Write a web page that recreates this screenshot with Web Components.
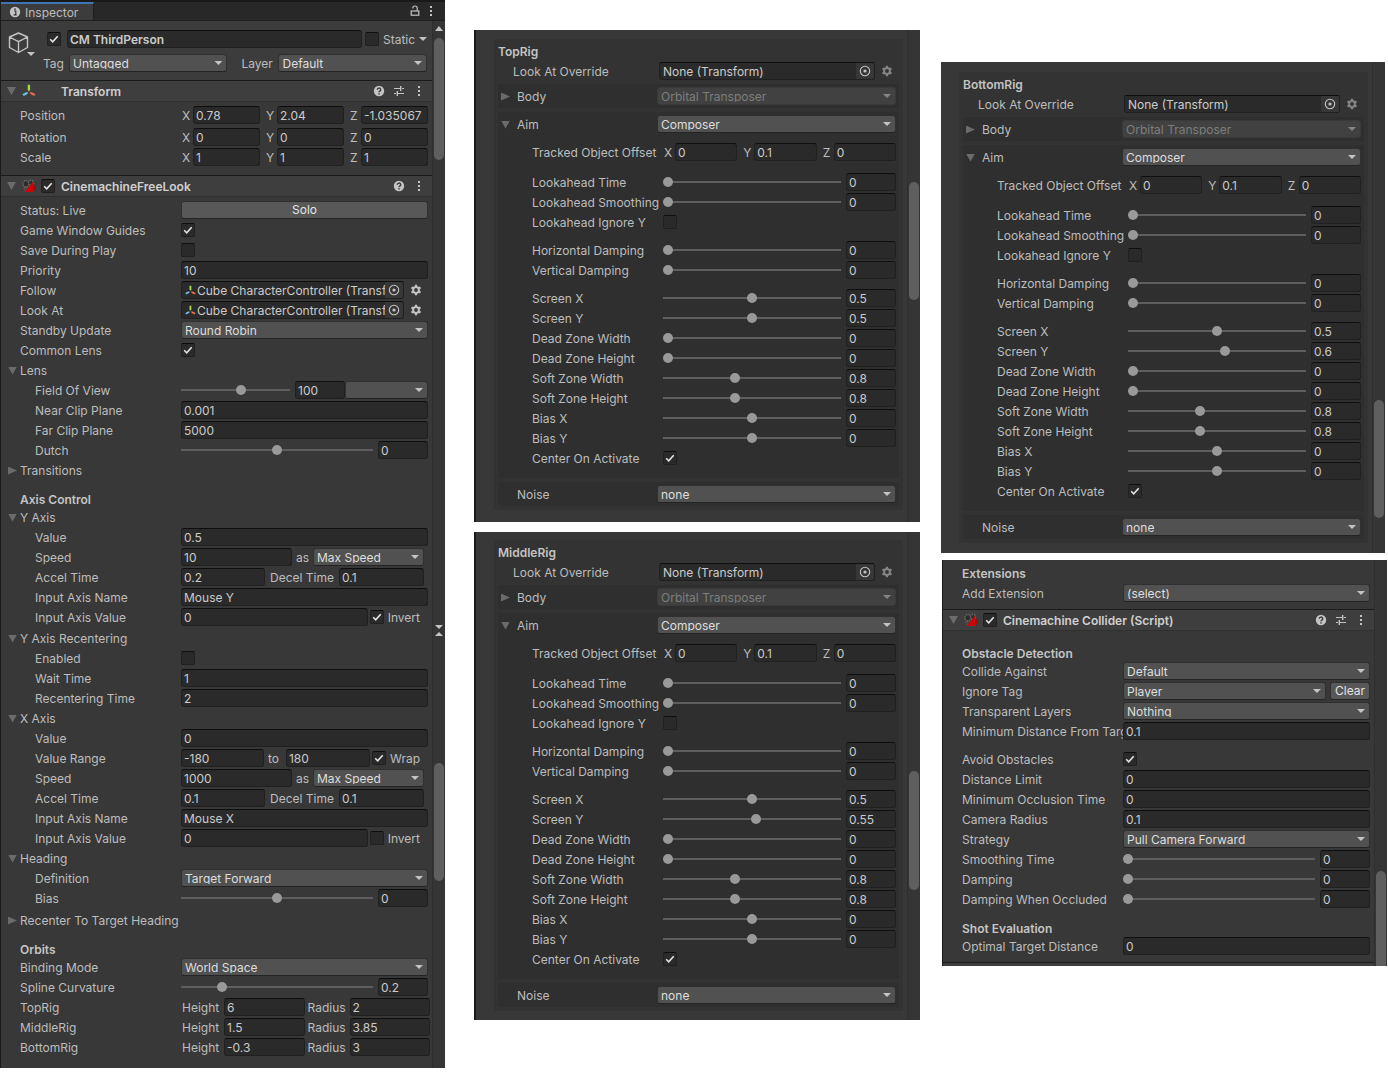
<!DOCTYPE html>
<html lang="en">
<head>
<meta charset="utf-8">
<title>Inspector</title>
<style>
  body { margin: 0; background: #fff; font: 12px/18px Inter, "Liberation Sans", sans-serif; color: #bdbdbd; }
</style>
</head>
<body>
<inspector-board>
  <inspector-column slot="a">
    <inspector-panel edge="1" tabbed bars="s5 u5 s7 t122 s465 d4 s3 u4 s127 t118 s187">
      <object-header></object-header>
      <component-header icon="transform" name="Transform" presets></component-header>
      <inspector-section>
        <field-row label="Position"><number-field prefix="X" value="0.78"></number-field><number-field prefix="Y" value="2.04"></number-field><number-field prefix="Z" value="-1.035067"></number-field></field-row>
        <v-space style="--h:2px"></v-space>
        <field-row label="Rotation"><number-field prefix="X" value="0"></number-field><number-field prefix="Y" value="0"></number-field><number-field prefix="Z" value="0"></number-field></field-row>
        <field-row label="Scale"><number-field prefix="X" value="1"></number-field><number-field prefix="Y" value="1"></number-field><number-field prefix="Z" value="1"></number-field></field-row>
        <v-space style="--h:7px"></v-space>
      </inspector-section>
      <component-header icon="camera" name="CinemachineFreeLook" toggle></component-header>
      <inspector-section>
        <field-row label="Status: Live"><push-button wide>Solo</push-button></field-row>
        <check-field label="Game Window Guides" checked></check-field>
        <check-field label="Save During Play"></check-field>
        <number-field label="Priority" value="10"></number-field>
        <object-field label="Follow" value="Cube CharacterController (Transform)" icon></object-field>
        <object-field label="Look At" value="Cube CharacterController (Transform)" icon></object-field>
        <popup-field label="Standby Update" value="Round Robin"></popup-field>
        <check-field label="Common Lens" checked></check-field>
        <fold-row label="Lens" open></fold-row>
        <slider-field nest label="Field Of View" min="1" max="179" value="100"><popup-field style="--w:83px" name="Lens preset" value=""></popup-field></slider-field>
        <number-field nest label="Near Clip Plane" value="0.001"></number-field>
        <number-field nest label="Far Clip Plane" value="5000"></number-field>
        <slider-field nest label="Dutch" min="-180" max="180" value="0"></slider-field>
        <fold-row label="Transitions"></fold-row>
        <section-title style="--h:9px">Axis Control</section-title>
        <fold-row label="Y Axis" open></fold-row>
        <number-field nest label="Value" value="0.5"></number-field>
        <field-row nest tight label="Speed" tail="4"><number-field name="Speed" value="10"></number-field><span>as</span><popup-field style="--w:111px" name="Speed mode" value="Max Speed"></popup-field></field-row>
        <field-row nest label="Accel Time" tail="4"><number-field name="Accel Time" value="0.2"></number-field><number-field long prefix="Decel Time" value="0.1"></number-field></field-row>
        <number-field nest label="Input Axis Name" value="Mouse Y"></number-field>
        <field-row nest snug label="Input Axis Value" tail="8"><number-field name="Input Axis Value" value="0"></number-field><check-field suffix="Invert" checked></check-field></field-row>
        <v-space style="--h:1px"></v-space>
        <fold-row label="Y Axis Recentering" open></fold-row>
        <check-field nest label="Enabled"></check-field>
        <number-field nest label="Wait Time" value="1"></number-field>
        <number-field nest label="Recentering Time" value="2"></number-field>
        <fold-row label="X Axis" open></fold-row>
        <number-field nest label="Value" value="0"></number-field>
        <field-row nest snug label="Value Range" tail="8"><number-field name="Minimum" value="-180"></number-field><number-field range prefix="to" value="180"></number-field><check-field suffix="Wrap" checked></check-field></field-row>
        <field-row nest tight label="Speed" tail="4"><number-field name="Speed" value="1000"></number-field><span>as</span><popup-field style="--w:111px" name="Speed mode" value="Max Speed"></popup-field></field-row>
        <field-row nest label="Accel Time" tail="4"><number-field name="Accel Time" value="0.1"></number-field><number-field long prefix="Decel Time" value="0.1"></number-field></field-row>
        <number-field nest label="Input Axis Name" value="Mouse X"></number-field>
        <field-row nest snug label="Input Axis Value" tail="8"><number-field name="Input Axis Value" value="0"></number-field><check-field suffix="Invert"></check-field></field-row>
        <fold-row label="Heading" open></fold-row>
        <popup-field nest label="Definition" value="Target Forward"></popup-field>
        <slider-field nest label="Bias" min="-180" max="180" value="0"></slider-field>
        <v-space style="--h:2px"></v-space>
        <fold-row label="Recenter To Target Heading"></fold-row>
        <section-title style="--h:9px">Orbits</section-title>
        <popup-field label="Binding Mode" value="World Space"></popup-field>
        <slider-field label="Spline Curvature" min="0" max="1" value="0.2"></slider-field>
        <field-row snug tail="-2" label="TopRig"><number-field word prefix="Height" value="6"></number-field><number-field word prefix="Radius" value="2"></number-field></field-row>
        <field-row snug tail="-2" label="MiddleRig"><number-field word prefix="Height" value="1.5"></number-field><number-field word prefix="Radius" value="3.85"></number-field></field-row>
        <field-row snug tail="-2" label="BottomRig"><number-field word prefix="Height" value="-0.3"></number-field><number-field word prefix="Radius" value="3"></number-field></field-row>
        <v-space style="--h:10px"></v-space>
      </inspector-section>
    </inspector-panel>
  </inspector-column>

  <inspector-column slot="b" style="--top:30px;--gap:10px">
    <inspector-panel edge="2" bars="s152 t118 s222">
      <rig-editor name="TopRig" screen-y="0.5" style="--top:9px;--bottom:12px"></rig-editor>
    </inspector-panel>
    <inspector-panel edge="2" bars="s239 t119 s130">
      <rig-editor name="MiddleRig" screen-y="0.55" style="--top:8px;--bottom:9px"></rig-editor>
    </inspector-panel>
  </inspector-column>

  <inspector-column slot="c" style="--top:62px;--gap:7px">
    <inspector-panel edge="0" bars="s338 t118 s35" style="margin-right:2px">
      <rig-editor name="BottomRig" screen-y="0.6" style="--top:10px;--bottom:10px"></rig-editor>
    </inspector-panel>
    <inspector-panel edge="1" bars="s311 b95" style="margin-left:1px">
      <inspector-section flush>
        <section-title style="--h:4px">Extensions</section-title>
        <v-space style="--h:2px"></v-space>
        <popup-field label="Add Extension" value="(select)"></popup-field>
        <v-space style="--h:5px"></v-space>
      </inspector-section>
      <component-header icon="camera" name="Cinemachine Collider (Script)" toggle presets></component-header>
      <inspector-section>
        <section-title style="--h:9px">Obstacle Detection</section-title>
        <popup-field label="Collide Against" value="Default"></popup-field>
        <field-row tight label="Ignore Tag"><popup-field name="Ignore Tag" value="Player"></popup-field><push-button>Clear</push-button></field-row>
        <popup-field label="Transparent Layers" value="Nothing"></popup-field>
        <number-field label="Minimum Distance From Target" value="0.1"></number-field>
        <v-space style="--h:8px"></v-space>
        <check-field label="Avoid Obstacles" checked></check-field>
        <number-field label="Distance Limit" value="0"></number-field>
        <number-field label="Minimum Occlusion Time" value="0"></number-field>
        <number-field label="Camera Radius" value="0.1"></number-field>
        <popup-field label="Strategy" value="Pull Camera Forward"></popup-field>
        <slider-field label="Smoothing Time" min="0" max="2" value="0"></slider-field>
        <slider-field label="Damping" min="0" max="10" value="0"></slider-field>
        <slider-field label="Damping When Occluded" min="0" max="10" value="0"></slider-field>
        <section-title style="--h:9px">Shot Evaluation</section-title>
        <number-field label="Optimal Target Distance" value="0"></number-field>
        <v-space style="--h:5px"></v-space>
      </inspector-section>
      <end-rule></end-rule>
    </inspector-panel>
  </inspector-column>
</inspector-board>

<script>
const ICONS = {
  transform: `<svg class="ic" width="14" height="14" viewBox="0 0 14 14"><path d="M5.7 0.8h2.4v5L6.9 7.4 5.7 5.8z" fill="#a6d94a"/><path d="M6.2 8.3L5.4 10 1.8 12 0.4 10.2 3.9 8.2z" fill="#6cc0ee"/><path d="M7.6 8.3l2.3-.1 3.6 2-1.4 1.9-3.6-2z" fill="#ee6e42"/></svg>`,
  camera: `<svg class="ic" width="16" height="14" viewBox="0 0 16 14"><path d="M2 7.500h6l-3.500 5H3z" fill="#4c4c4c"/><g fill="#2c2c2c" stroke="#6a6a6a" stroke-width="1.400" stroke-dasharray="1.600 .9"><circle cx="5" cy="4.800" r="3.200"/><circle cx="10" cy="3.800" r="2.500"/></g><path d="M3.800 13L12.200 2.500V13z" fill="#cc0606"/><path d="M12 7.800L15 5v7.500L12 10.500z" fill="#b00404"/></svg>`,
  help: `<svg width="12" height="12" viewBox="0 0 12 12"><circle cx="6" cy="6" r="5.200" fill="#c4c4c4"/><path d="M4.300 4.700a1.700 1.600 0 1 1 2.500 1.400c-.6.300-.8.600-.8 1.100" fill="none" stroke="#3a3a3a" stroke-width="1.400"/><rect x="5.300" y="8.200" width="1.400" height="1.400" fill="#3a3a3a"/></svg>`,
  preset: `<svg width="12" height="12" viewBox="0 0 12 12"><path d="M1 3.500h6M9 3.500h2M1 8.500h2M5 8.500h6" stroke="#c4c4c4" stroke-width="1.200"/><path d="M7.700 1v5M4.300 6v5" stroke="#c4c4c4" stroke-width="1.400"/></svg>`,
  dots: `<svg width="12" height="12" viewBox="0 0 12 12" fill="#c4c4c4"><rect x="5" y="1" width="2" height="2"/><rect x="5" y="5" width="2" height="2"/><rect x="5" y="9" width="2" height="2"/></svg>`,
  gear: `<svg width="12" height="12" viewBox="0 0 12 12"><circle cx="6" cy="6" r="2.900" fill="none" stroke="currentColor" stroke-width="2"/><g stroke="currentColor" stroke-width="2.200"><path d="M6 .8v1.700M6 9.500v1.700M1.500 3.400l1.500.9M9 7.700l1.500.9M1.500 8.600L3 7.700M9 4.300l1.500-.9"/></g></svg>`,
  picker: `<svg width="12" height="12" viewBox="0 0 12 12"><circle cx="6" cy="6" r="4.700" fill="none" stroke="#c4c4c4" stroke-width="1.100"/><circle cx="6" cy="6" r="1.600" fill="#c4c4c4"/></svg>`,
  lock: `<svg width="10" height="12" viewBox="0 0 10 12" fill="none" stroke="#c4c4c4" stroke-width="1.200"><rect x="1.200" y="6" width="7.600" height="4.200"/><path d="M2.800 3.600V3a2.200 2 0 0 1 4.400 0v3"/></svg>`,
  info: `<svg width="12" height="12" viewBox="0 0 12 12"><circle cx="6" cy="6" r="5.200" fill="#c4c4c4"/><path d="M5 5h1.800v3.500M4.600 8.800h3" stroke="#333" stroke-width="1.200" fill="none"/><rect x="5.300" y="2.400" width="1.500" height="1.500" fill="#333"/></svg>`,
  cube: `<svg width="22" height="24" viewBox="0 0 22 24" fill="none" stroke="#c4c4c4" stroke-width="1.400" stroke-linejoin="round"><path d="M11.500 2l9 4v10.500l-9 5-9-5V6zM2.500 6l9 4.700 9-4.700M11.500 10.700v10.800"/></svg>`,
  check: `<svg class="mark" width="14" height="14" viewBox="0 0 14 14" fill="none" stroke="#e4e4e4" stroke-width="1.600"><path d="M3.200 7.300l2.500 2.500 5-5.600"/></svg>`
};

const CSS = `
  :host { display: block; }
  * { box-sizing: border-box; }
  button, input, select { font: inherit; color: inherit; margin: 0; }
  button { border: 0; padding: 0; background: none; display: flex; align-items: center; justify-content: center; }
  svg { display: block; flex: none; }
  .row { display: flex; height: 20px; align-items: flex-start; }
  .label { flex: 0 0 var(--label-w, 180px); padding: 1px 0 0 var(--indent, 19px); white-space: nowrap; overflow: hidden; height: 20px; line-height: 18px; color: #bdbdbd; }
  :host([nest]) .label { padding-left: var(--nest, 34px); }
  .ctl { flex: 1; min-width: 0; display: flex; gap: 5px; height: 18px; padding-right: var(--pad-r, 4px); }
  .bare { display: flex; height: 18px; width: 100%; }
  .box { flex: 1; width: 100%; min-width: 0; height: 18px; padding: 1px 2px 0; background: #2a2a2a; color: #cbcbcb; border: 1px solid #202020; border-top-color: #0e0e0e; border-radius: 3px; outline: 0; }
  .stack { display: grid; align-items: center; }
  .stack > * { grid-area: 1 / 1; }
  .check { flex: none; width: 14px; height: 14px; margin-top: 2px; }
  .check input { appearance: none; width: 14px; height: 14px; background: #2a2a2a; border: 1px solid #202020; border-top-color: #0e0e0e; border-radius: 2px; }
  .mark { pointer-events: none; visibility: hidden; }
  input:checked + .mark { visibility: visible; }
  .popup { flex: 1; min-width: 0; height: 18px; }
  .popup select { appearance: none; width: 100%; height: 18px; padding: 0 14px 2px 3px; background: #515151; color: #dedede; border: 1px solid #303030; border-bottom-color: #242424; border-radius: 3px; outline: 0; }
  .tri { justify-self: end; margin-right: 5px; width: 8px; height: 4px; background: #c4c4c4; clip-path: polygon(0 0, 100% 0, 50% 100%); pointer-events: none; }
  .popup select:disabled { background: #414141; border-color: #3a3a3a; color: #7d7d7d; opacity: 1; }
  select:disabled + .tri { background: #858585; }
`;

let serial = 0;
class Piece extends HTMLElement {
  connectedCallback() {
    if (this.shadowRoot) return;
    this.uid = 'c' + (++serial);
    this.attachShadow({ mode: 'open' }).innerHTML = `<style>${CSS}${this.css()}</style>${this.view()}`;
  }
  at(n) { return this.getAttribute(n) || ''; }
  css() { return ''; }
  view() { return '<slot></slot>'; }
}
const define = (name, view, css = '') => customElements.define(name, class extends Piece {
  css() { return typeof css === 'function' ? css(this) : css; }
  view() { return view(this); }
});

const wrap = (el, control) => el.hasAttribute('label')
  ? `<div class="row"><label class="label" for="${el.uid}">${el.at('label')}</label><div class="ctl">${control}</div></div>`
  : `<div class="bare">${control}</div>`;
const aria = el => el.at('name') ? `aria-label="${el.at('name')}"` : '';
const checkbox = (id, on, extra = '') => `<span class="check stack"><input type="checkbox" id="${id}" ${on ? 'checked' : ''} ${extra}>${ICONS.check}</span>`;
const popup = (id, value, extra = '') => `<span class="popup stack"><select id="${id}" ${extra}><option>${value}</option></select><i class="tri"></i></span>`;

define('inspector-board', () => '<slot name="a"></slot><slot name="b"></slot><slot name="c"></slot>', `
  :host { display: flex; align-items: flex-start; padding-right: 1px; }
  ::slotted(*) { flex: 446 1 0; min-width: 0; }
  ::slotted([slot=a]) { flex-grow: 445; margin-right: 29px; }
  ::slotted([slot=b]) { margin-right: 21px; }`);

define('inspector-column', () => '<slot></slot>', `
  :host { display: flex; flex-direction: column; gap: var(--gap, 0); padding-top: var(--top, 0); }`);

define('scroll-strip', el => el.at('bars').split(' ').map(b => `<i class="${b[0]}" style="flex-grow:${b.slice(1)}"></i>`).join(''), `
  :host { display: flex; flex-direction: column; flex: 0 0 13px; padding-left: 1px; border-left: 1px solid #2f2f2f; background: #353535; box-sizing: border-box; }
  i { flex: 0 1 0; width: 10px; }
  .t { background: #5f5f5f; border-radius: 5px; }
  .b { background: #5f5f5f; border-radius: 5px 5px 0 0; }
  .u, .d { width: 8px; margin-left: 1px; background: #c4c4c4; clip-path: polygon(50% 0, 100% 100%, 0 100%); }
  .d { clip-path: polygon(0 0, 100% 0, 50% 100%); }`);

define('inspector-panel', el => `
  ${el.hasAttribute('tabbed') ? `<div class="tabs"><button class="tab">${ICONS.info}<span>Inspector</span></button><span class="fill"></span><button aria-label="Lock">${ICONS.lock}</button><button aria-label="Menu">${ICONS.dots}</button></div>` : ''}
  <div class="main"><div class="content"><slot></slot></div><scroll-strip bars="${el.at('bars')}"></scroll-strip></div>`,
  el => `
  :host { background: #383838; border-left: ${el.at('edge')}px solid #1b1b1b; }
  .tabs { display: flex; align-items: center; height: 21px; padding: 0 8px 0 0; gap: 5px; background: #282828; border-top: 2px solid #191919; border-bottom: 1px solid #1f1f1f; }
  .tab { height: 18px; width: 93px; justify-content: flex-start; gap: 4px; padding: 0 0 0 8px; background: #3c3c3c; border-top: 2px solid #3d75b5; border-right: 1px solid #1f1f1f; }
  .tab span { padding-top: 1px; }
  .fill { flex: 1; }
  .main { display: flex; }
  .content { flex: 1; min-width: 0; }`);

define('object-header', () => `
  <button class="cube" aria-label="Icon">${ICONS.cube}<i class="tri"></i></button>
  <div class="lines">
    <div class="line">${checkbox('active', true, 'aria-label="Active"')}<input class="box name" aria-label="Name" value="CM ThirdPerson">${checkbox('static', false)}<label for="static">Static</label><button aria-label="Static flags"><i class="tri"></i></button></div>
    <div class="line two"><label for="tag">Tag</label>${popup('tag', 'Untagged')}<label class="layer" for="layer">Layer</label>${popup('layer', 'Default')}</div>
  </div>`, `
  :host { display: flex; height: 59px; box-sizing: border-box; padding: 9px 5px 0 6px; background: #3c3c3c; }
  .cube { width: 29px; height: 26px; align-items: flex-end; justify-content: flex-start; }
  .cube svg { margin-bottom: 1px; }
  .cube .tri, button .tri { margin: 0; }
  .cube .tri { margin-left: -2px; }
  .lines { flex: 1; display: flex; flex-direction: column; gap: 6px; padding-left: 11px; }
  .line { display: flex; height: 18px; }
  .line > label { padding-top: 1px; }
  .name { font-weight: 600; margin: 0 3px 0 6px; }
  .line label[for=static] { width: 36px; margin-left: 4px; }
  .two { margin-left: -4px; }
  .two label { width: 26px; }
  .two .layer { width: 37px; margin-left: 14px; }
  .popup { flex: 159; } .layer + .popup { flex: 149; }`);

define('component-header', el => `
  <button class="fold" aria-label="Collapse ${el.at('name')}"><i class="arrow"></i></button>
  <span class="icon">${ICONS[el.at('icon')]}</span>
  <span class="tog">${el.hasAttribute('toggle') ? checkbox('on', true, `aria-label="Enable ${el.at('name')}"`) : ''}</span>
  <span class="title">${el.at('name')}</span>
  <button aria-label="Help">${ICONS.help}</button>
  ${el.hasAttribute('presets') ? `<button aria-label="Presets">${ICONS.preset}</button>` : ''}
  <button aria-label="More">${ICONS.dots}</button>`, `
  :host { display: flex; align-items: center; height: 22px; box-sizing: border-box; background: #3e3e3e; border-top: 1px solid #1a1a1a; border-bottom: 1px solid #303030; padding: 0 7px 0 6px; gap: 8px; }
  .fold { width: 9px; }
  .arrow { width: 9px; height: 8px; background: #6b6b6b; clip-path: polygon(0 0, 100% 0, 50% 100%); }
  .icon { width: 16px; margin-left: -3px; }
  .icon svg { margin: 0 auto; }
  .tog { width: 14px; margin-left: -4px; } .tog .check { margin: 0; }
  .title { flex: 1; font-weight: 600; color: #d0d0d0; padding-top: 1px; margin-left: -2px; }`);

define('inspector-section', () => '<slot></slot>', `
  :host { padding-top: 4px; } :host([flush]) { padding-top: 0; }`);
define('v-space', () => '', ':host { height: var(--h); }');
define('end-rule', () => '', ':host { height: 4px; box-sizing: border-box; border-top: 1px solid #1a1a1a; background: #3e3e3e; }');
define('section-title', () => '<slot></slot>', `
  :host { height: 18px; padding: var(--h, 0) 0 0 var(--indent, 19px); font-weight: 600; color: #c4c4c4; line-height: 20px; }`);

define('field-row', el => `<div class="row" role="group" aria-label="${el.at('label')}"><span class="label">${el.at('label')}</span><div class="ctl"><slot></slot></div></div>`,
  el => `
  ${el.hasAttribute('tail') ? `.ctl { padding-right: ${Number(el.at('tail')) + 4}px; }` : ''}
  :host([tight]) .ctl { gap: 4px; }
  :host([snug]) .ctl { gap: 2px; }
  ::slotted(*) { flex: 1 1 0; min-width: 0; }
  ::slotted(span), ::slotted(push-button), ::slotted(check-field) { flex: none; }
  ::slotted(push-button[wide]) { flex: 1; }
  ::slotted(span) { padding-top: 1px; }
  ::slotted(popup-field[style]) { flex: 0 0 var(--w); }
  ::slotted(number-field[long]) { flex: 0 0 154px; }
  ::slotted(number-field[range]) { flex: 0 0 104px; }`);

define('number-field', el => {
  const pre = el.hasAttribute('prefix') ? `<label class="pre" for="${el.uid}">${el.at('prefix')}</label>` : '';
  return wrap(el, `${pre}<input class="box" id="${el.uid}" value="${el.at('value')}" ${aria(el)}>`);
}, `
  .pre { flex: 0 0 12px; padding: 1px 0 0 1px; white-space: nowrap; }
  :host([word]) .pre { flex-basis: 43px; }
  :host([long]) .pre { flex-basis: 69px; padding-left: 0; }
  :host([range]) .pre { flex-basis: 20px; padding-left: 2px; }`);

define('slider-field', el => wrap(el, `
  <input type="range" aria-label="${el.at('label')}" min="${el.at('min')}" max="${el.at('max')}" step="any" value="${el.at('value')}">
  <span class="num"><input class="box" id="${el.uid}" value="${el.at('value')}"></span><slot></slot>`), `
  .num { flex: 0 0 50px; display: flex; }
  ::slotted(*) { flex: 0 0 var(--w); margin-left: -5px; }
  input[type=range] { appearance: none; flex: 1; min-width: 0; height: 18px; background: linear-gradient(#5e5e5e, #5e5e5e) center / 100% 2px no-repeat; }
  input[type=range]::-webkit-slider-thumb { appearance: none; width: 10px; height: 10px; border-radius: 50%; background: #999; }`);

define('check-field', el => el.hasAttribute('suffix')
  ? `<div class="bare">${checkbox(el.uid, el.hasAttribute('checked'))}<label class="suf" for="${el.uid}">${el.at('suffix')}</label></div>`
  : wrap(el, checkbox(el.uid, el.hasAttribute('checked'))), '.suf { padding: 1px 0 0 4px; }');

define('popup-field', el => wrap(el, popup(el.uid, el.at('value'), `${aria(el)} ${el.hasAttribute('disabled') ? 'disabled' : ''}`)));

define('object-field', el => wrap(el, `
  <span class="box obj">${el.hasAttribute('icon') ? ICONS.transform : ''}<input id="${el.uid}" readonly value="${el.at('value')}"><button class="pick" aria-label="Select object">${ICONS.picker}</button></span>
  <button class="gear" aria-label="Options">${ICONS.gear}</button>`), `
  .ctl { gap: 0; }
  .obj { display: flex; align-items: center; padding: 0 0 0 3px; overflow: hidden; }
  .obj .ic { width: 11px; height: 11px; margin-right: 1px; }
  .obj input { flex: 1; min-width: 0; border: 0; padding: 1px 0 0; background: none; outline: 0; height: 16px; text-overflow: clip; }
  .pick { width: 18px; height: 16px; background: #373737; flex: none; }
  .gear { width: 24px; height: 18px; color: var(--gear, #c4c4c4); }`);

define('fold-row', el => `<div class="row"><button class="fold" aria-expanded="${el.hasAttribute('open')}"><i></i><span>${el.at('label')}</span></button>${el.hasAttribute('popup') ? `<div class="ctl">${popup(el.uid, el.at('popup'), `aria-label="${el.at('label')}" ${el.hasAttribute('locked') ? 'disabled' : ''}`)}</div>` : ''}</div>`,
  el => `
  .fold { flex: 0 0 var(--label-w, 180px); height: 18px; justify-content: flex-start; padding: 1px 0 0 7px; color: #bdbdbd; white-space: nowrap; }
  .fold i { flex: none; width: 9px; height: 8px; margin-right: 3px; background: #6b6b6b; clip-path: ${el.hasAttribute('open') ? 'polygon(0 0, 100% 0, 50% 100%)' : 'polygon(0 0, 100% 50%, 0 100%)'}; }
  :host([popup]) .fold { padding-left: 3px; } :host([popup]) .fold i { margin-right: 7px; }`);

define('push-button', () => '<button><slot></slot></button>', `
  button { width: 100%; height: 18px; padding: 0 4px 1px; background: #585858; color: #e4e4e4; border: 1px solid #303030; border-bottom-color: #242424; border-radius: 3px; }`);

const gap = h => `<v-space style="--h:${h}px"></v-space>`;
const sliders = list => list.map(([l, min, max, v]) => `<slider-field label="${l}" min="${min}" max="${max}" value="${v}"></slider-field>`).join('');
define('rig-editor', el => `
  <div class="rig">
    <section-title>${el.at('name')}</section-title>${gap(2)}
    <object-field class="look" label="Look At Override" value="None (Transform)"></object-field>${gap(2)}
    <div class="group one"><fold-row label="Body" popup="Orbital Transposer" locked></fold-row></div>
    <div class="group aim"><fold-row label="Aim" open popup="Composer"></fold-row>${gap(8)}
      <div class="deep">
        <field-row label="Tracked Object Offset"><number-field prefix="X" value="0"></number-field><number-field prefix="Y" value="0.1"></number-field><number-field prefix="Z" value="0"></number-field></field-row>${gap(10)}
        ${sliders([['Lookahead Time', 0, 1, 0], ['Lookahead Smoothing', 0, 30, 0]])}
        <check-field label="Lookahead Ignore Y"></check-field>${gap(8)}
        ${sliders([['Horizontal Damping', 0, 20, 0], ['Vertical Damping', 0, 20, 0]])}${gap(8)}
        ${sliders([['Screen X', -0.5, 1.5, 0.5], ['Screen Y', -0.5, 1.5, el.at('screen-y')], ['Dead Zone Width', 0, 2, 0], ['Dead Zone Height', 0, 2, 0], ['Soft Zone Width', 0, 2, 0.8], ['Soft Zone Height', 0, 2, 0.8], ['Bias X', -0.5, 0.5, 0], ['Bias Y', -0.5, 0.5, 0]])}
        <check-field label="Center On Activate" checked></check-field>${gap(9)}
      </div>
    </div>
    <div class="group one"><popup-field label="Noise" value="none"></popup-field></div>
  </div>`, `
  :host { padding: var(--top) 4px var(--bottom) 18px; }
  .rig { background: #333; padding: 3px 4px 4px; --indent: 0px; --label-w: 160px; }
  .look { --indent: 15px; --label-w: 161px; --pad-r: 0px; --gear: #858585; }
  .group { background: #2f2f2f; padding-top: 3px; --label-w: 159px; --pad-r: 3px; --indent: 19px; }
  .one { height: 24px; }
  .aim { margin: 4px 0; }
  .deep { --indent: 34px; --label-w: 165px; --pad-r: 3px; }`);
</script>
</body>
</html>
